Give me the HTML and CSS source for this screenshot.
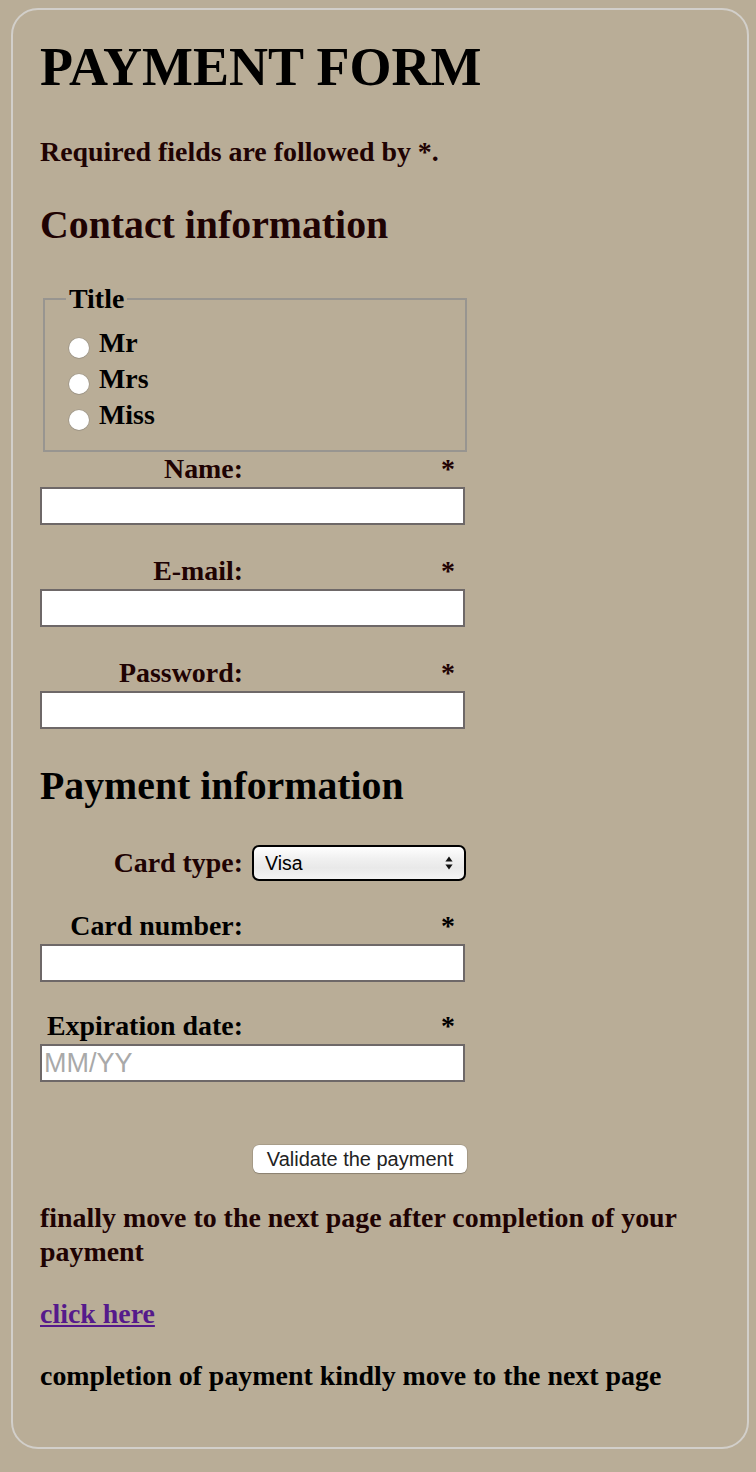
FILE: index.html
```html
<!DOCTYPE html>
<html lang="en">
<head>
<meta charset="utf-8">
<title>Payment form</title>
<link rel="stylesheet" href="styles.css">
</head>
<body>
<form class="card">
  <h1 class="title">PAYMENT FORM</h1>
  <p class="note brown">Required fields are followed by *.</p>

  <h2 class="section brown first">Contact information</h2>
  <fieldset class="group">
    <legend class="group-legend">Title</legend>
    <div class="radio-row"><input class="radio" type="radio" name="title" id="t1"><label for="t1">Mr</label></div>
    <div class="radio-row"><input class="radio" type="radio" name="title" id="t2"><label for="t2">Mrs</label></div>
    <div class="radio-row"><input class="radio" type="radio" name="title" id="t3"><label for="t3">Miss</label></div>
  </fieldset>

  <div class="field brown">
    <div class="field-head"><label class="field-label" for="name">Name:</label><span class="star">*</span></div>
    <input class="text-input" type="text" id="name">
  </div>
  <div class="field brown spaced">
    <div class="field-head"><label class="field-label" for="mail">E-mail:</label><span class="star">*</span></div>
    <input class="text-input" type="email" id="mail">
  </div>
  <div class="field brown spaced">
    <div class="field-head"><label class="field-label" for="pwd">Password:</label><span class="star">*</span></div>
    <input class="text-input" type="password" id="pwd">
  </div>

  <h2 class="section second">Payment information</h2>
  <div class="select-row brown">
    <label class="field-label" for="card">Card type:</label>
    <span class="select-wrap">
      <select class="select" id="card">
        <option>Visa</option>
        <option>Mastercard</option>
        <option>American Express</option>
      </select>
      <svg class="select-arrows" width="8" height="14" viewBox="0 0 8 14" aria-hidden="true">
        <path d="M4 0.5 L7.6 5.5 L0.4 5.5 Z" fill="#111"/>
        <path d="M4 13.5 L7.6 8.5 L0.4 8.5 Z" fill="#111"/>
      </svg>
    </span>
  </div>
  <div class="field card-num">
    <div class="field-head"><label class="field-label" for="num">Card number:</label><span class="star">*</span></div>
    <input class="text-input" type="text" id="num">
  </div>
  <div class="field expiry">
    <div class="field-head"><label class="field-label" for="exp">Expiration date:</label><span class="star">*</span></div>
    <input class="text-input" type="text" id="exp" placeholder="MM/YY">
  </div>

  <div class="button-row">
    <button class="submit" type="button">Validate the payment</button>
  </div>

  <p class="para brown first-para">finally move to the next page after completion of your payment</p>
  <p class="para"><a class="link" href="#next">click here</a></p>
  <p class="para">completion of payment kindly move to the next page</p>
</form>
</body>
</html>
```

FILE: styles.css
```css
html {
  background: #b9ad97;
}

body {
  margin: 8px 7px 23px 11px;
  background: #b9ad97;
  font-family: "Liberation Serif", "Times New Roman", serif;
  font-weight: bold;
  color: #000;
}

.card {
  border: 2px solid #d2cfca;
  border-radius: 27px;
  padding: 27px 27px 54px 27px;
}

.brown {
  color: #1f0303;
}

.title {
  margin: 0;
  font-size: 54px;
  line-height: 60px;
  font-weight: bold;
}

.note {
  margin: 38px 0 0;
  font-size: 27.9px;
  line-height: 34px;
}

.section {
  margin: 0;
  font-size: 39.8px;
  line-height: 46px;
  font-weight: bold;
}

.section.first {
  margin-top: 33px;
}

.section.second {
  margin-top: 34px;
}

.group {
  box-sizing: border-box;
  width: 424px;
  margin: 34px 0 0 3px;
  border: 2px solid #989590;
  padding: 9px 0 17px 21px;
  min-width: 0;
}

.group-legend {
  padding: 0 3px;
  font-size: 27.9px;
  line-height: 34px;
}

.radio-row {
  font-size: 27.9px;
  line-height: 36px;
  height: 36px;
}

.radio {
  -webkit-appearance: none;
  appearance: none;
  display: inline-block;
  width: 20px;
  height: 20px;
  margin: 0 10px 0 3px;
  border-radius: 50%;
  background: radial-gradient(circle, #ffffff 60%, #f4f4f4 100%);
  box-shadow: 0 0 0 0.6px rgba(120, 120, 120, 0.45), 0 0.5px 1px rgba(0, 0, 0, 0.15);
  vertical-align: -6px;
}

.field {
  width: 425px;
}

.field.spaced {
  margin-top: 29px;
}

.field.card-num {
  margin-top: 28px;
}

.field.expiry {
  margin-top: 27px;
}

.field-head {
  display: flex;
  height: 34px;
  font-size: 27.9px;
  line-height: 34px;
}

.field-label {
  display: inline-block;
  width: 203px;
  flex: none;
  text-align: right;
}

.star {
  margin-left: auto;
  padding-right: 10px;
}

.text-input {
  display: block;
  box-sizing: border-box;
  width: 425px;
  height: 38px;
  margin: 1px 0 0;
  padding: 0 2px;
  border: 2px solid #6e6868;
  background: #fff;
  font-family: "Liberation Sans", Arial, sans-serif;
  font-size: 27px;
  font-weight: normal;
  color: #000;
  outline: none;
}

.text-input::placeholder {
  color: #a9a9a9;
}

.select-row {
  display: flex;
  align-items: center;
  height: 36px;
  margin-top: 36px;
  font-size: 27.9px;
  line-height: 34px;
}

.select-wrap {
  position: relative;
  display: block;
  margin-left: 9px;
  width: 214px;
  height: 36px;
}

.select {
  -webkit-appearance: none;
  appearance: none;
  box-sizing: border-box;
  display: block;
  width: 214px;
  height: 36px;
  margin: 0;
  padding: 0 0 0 11px;
  border: 2px solid #000;
  border-radius: 7px;
  background: linear-gradient(to bottom, #ffffff 0%, #f1f1f1 35%, #e9e9e9 65%, #f4f4f4 100%);
  font-family: "Liberation Sans", Arial, sans-serif;
  font-size: 19.5px;
  font-weight: normal;
  color: #000;
}

.select-arrows {
  position: absolute;
  right: 13px;
  top: 11px;
  pointer-events: none;
}

.button-row {
  margin-top: 63px;
  padding-left: 213px;
  height: 28px;
}

.submit {
  display: block;
  box-sizing: border-box;
  width: 214px;
  height: 28px;
  margin: 0;
  padding: 0;
  border: none;
  border-radius: 6px;
  background: #fff;
  box-shadow: 0 0 0 0.5px rgba(0, 0, 0, 0.18), 0 1px 1px rgba(0, 0, 0, 0.18);
  font-family: "Liberation Sans", Arial, sans-serif;
  font-size: 20px;
  font-weight: normal;
  color: #222;
  line-height: 28px;
}

.para {
  margin: 28px 0 0;
  font-size: 27.9px;
  line-height: 34px;
}

.link {
  color: #551a8b;
  text-decoration: underline;
}
```
